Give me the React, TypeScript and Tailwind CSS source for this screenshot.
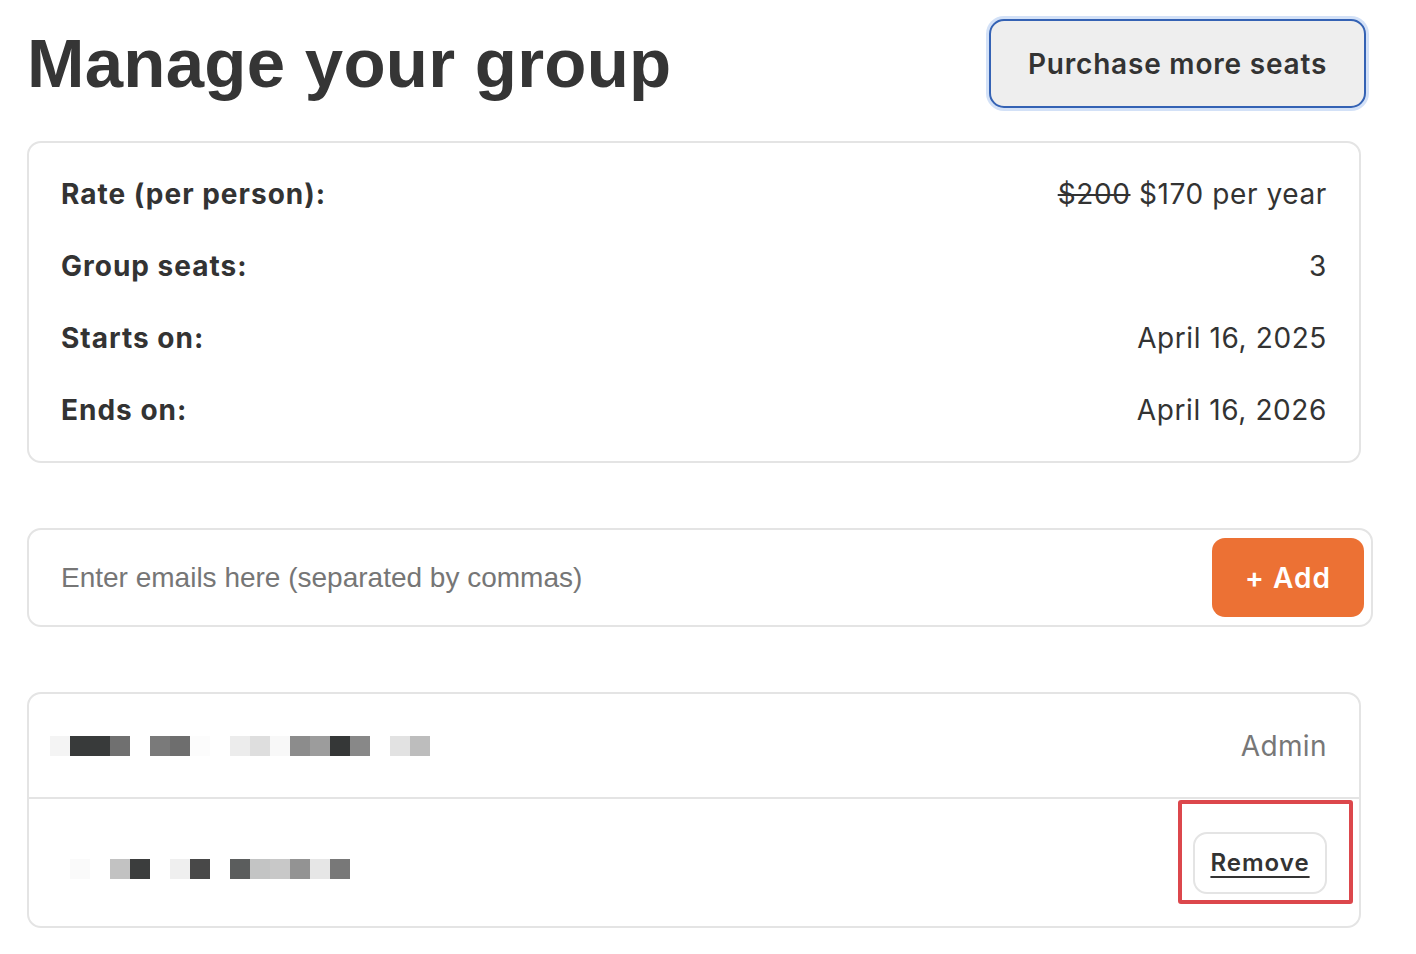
import React from "react"

const inter = "font-['Inter',sans-serif]"
const helv = "font-['Liberation_Sans',Arial,sans-serif]"

type Detail = { label: string; value: React.ReactNode }

const details: Detail[] = [
  {
    label: "Rate (per person):",
    value: (
      <>
        <span className="line-through">$200</span> $170 per year
      </>
    ),
  },
  { label: "Group seats:", value: "3" },
  { label: "Starts on:", value: "April 16, 2025" },
  { label: "Ends on:", value: "April 16, 2026" },
]

// Redacted email addresses, one 20px swatch per cell ("" = blank)
const adminEmail = [
  "#f4f4f4", "#383a3a", "#383a3a", "#707070", "", "#7a7a7a", "#6e6e6e", "#fcfcfc", "",
  "#ececec", "#dedede", "#f8f8f8", "#8c8c8c", "#9c9c9c", "#353737", "#888888", "",
  "#e2e2e2", "#bdbdbd",
]
const memberEmail = [
  "", "#fafafa", "", "#c2c2c2", "#3b3d3d", "", "#efefef", "#484848", "",
  "#5b5d5d", "#c3c4c4", "#c8c8c8", "#939393", "#e6e6e6", "#787878",
]

function Redacted({ cells }: { cells: string[] }) {
  return (
    <div className="flex">
      {cells.map((c, i) => (
        <div key={i} className="h-[20px] w-[20px]" style={{ backgroundColor: c || "transparent" }} />
      ))}
    </div>
  )
}

export default function App() {
  return (
    <div className={`min-h-[954px] w-[1416px] bg-white pl-[27px] pt-[19px] text-[#333] ${inter}`}>
      {/* Header */}
      <div className="flex w-[1339px] items-center justify-between">
        <h1 className={`${helv} text-[69px] leading-none font-bold tracking-[0.25px] text-[#353535]`}>
          Manage your group
        </h1>
        <button className="flex h-[89px] w-[377px] items-center justify-center rounded-[15px] border-2 border-[#3462b4] bg-[#eeeeee] text-[28px] font-semibold tracking-[0.8px] text-[#333] shadow-[0_0_0_3px_#d3e1f7]">
          Purchase more seats
        </button>
      </div>

      {/* Subscription details */}
      <div className="mt-[33px] flex w-[1334px] flex-col gap-[32px] rounded-[14px] border-2 border-[#e4e4e4] px-[32px] py-[31px]">
        {details.map((d) => (
          <div key={d.label} className="flex h-[40px] items-center justify-between text-[28px]">
            <span className="font-bold tracking-[1px] text-[#333]">{d.label}</span>
            <span className="tracking-[0.6px] text-[#333]">{d.value}</span>
          </div>
        ))}
      </div>

      {/* Invite form */}
      <div className="mt-[65px] flex h-[99px] w-[1346px] items-center justify-between rounded-[14px] border-2 border-[#e4e4e4] pl-[32px] pr-[7px]">
        <input
          className={`${helv} flex-1 bg-transparent text-[28px] text-[#333] outline-none placeholder:text-[#767676]`}
          placeholder="Enter emails here (separated by commas)"
        />
        <button className="flex h-[79px] w-[152px] items-center justify-center rounded-[13px] bg-[#ec7134] text-[28px] font-semibold tracking-[1px] text-white">
          + Add
        </button>
      </div>

      {/* Members */}
      <div className="mt-[65px] w-[1334px] rounded-[14px] border-2 border-[#e4e4e4]">
        <div className="flex h-[105px] items-center justify-between border-b-2 border-[#e4e4e4] pl-[21px] pr-[32px]">
          <Redacted cells={adminEmail} />
          <span className="text-[28px] tracking-[0.4px] text-[#777]">Admin</span>
        </div>
        <div className="flex h-[127px] items-center justify-between pl-[21px] pr-[32px]">
          <div className="mt-[12px]">
            <Redacted cells={memberEmail} />
          </div>
          <div className="relative">
            <button className="flex h-[62px] w-[134px] items-center justify-center rounded-[14px] border-2 border-[#e4e4e4] bg-white text-[24px] font-semibold tracking-[1px] text-[#333] underline underline-offset-[5px] decoration-2">
              Remove
            </button>
            <div className="pointer-events-none absolute -top-[32px] -right-[26px] -bottom-[10px] -left-[15px] rounded-[3px] border-4 border-[#dc474c]" />
          </div>
        </div>
      </div>
    </div>
  )
}
